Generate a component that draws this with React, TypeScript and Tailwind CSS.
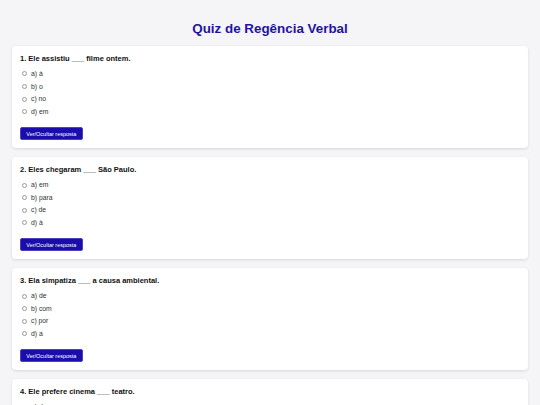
import React from 'react';

interface Question {
  text: string;
  options: string[];
}

const questions: Question[] = [
  { text: '1. Ele assistiu ___ filme ontem.', options: ['a) à', 'b) o', 'c) no', 'd) em'] },
  { text: '2. Eles chegaram ___ São Paulo.', options: ['a) em', 'b) para', 'c) de', 'd) à'] },
  { text: '3. Ela simpatiza ___ a causa ambiental.', options: ['a) de', 'b) com', 'c) por', 'd) a'] },
  { text: '4. Ele prefere cinema ___ teatro.', options: ['a) do que', 'b) a', 'c) que', 'd) de'] },
];

const QuestionCard: React.FC<{ q: Question; index: number }> = ({ q, index }) => (
  <div className="bg-white rounded-[4px] shadow-[0_1px_3px_rgba(0,0,0,0.12)] px-[8px] pt-[8px] pb-[8px]">
    <p className="text-[7.5px] leading-[9px] font-bold text-[#111]">{q.text}</p>
    <div className="mt-[4.7px] flex flex-col">
      {q.options.map((opt) => (
        <label key={opt} className="flex items-center h-[12.6px] pl-[2.3px] text-[6.8px] leading-[8px] text-[#333]">
          <input
            type="radio"
            name={`q${index}`}
            className="appearance-none shrink-0 w-[5px] h-[5px] rounded-full border-[0.7px] border-[#9a9a9a] bg-white m-0"
          />
          <span className="ml-[3.7px]">{opt}</span>
        </label>
      ))}
    </div>
    <button className="block mt-[9px] h-[13px] px-[5.3px] rounded-[2px] bg-[#1a0dab] text-white text-[5.5px] leading-[12px] border-[0.5px] border-[#4b3fc4]">
      Ver/Ocultar resposta
    </button>
  </div>
);

export default function App() {
  return (
    <div className="min-h-screen bg-[#f5f5f7] px-[12px] pt-[20.5px] pb-[20px]" style={{ fontFamily: '"Liberation Sans", Arial, sans-serif' }}>
      <h1 className="text-center text-[13.4px] leading-[16px] font-bold text-[#1f13a3]">Quiz de Regência Verbal</h1>
      <div className="mt-[9.5px] flex flex-col gap-[9px]">
        {questions.map((q, i) => (
          <QuestionCard key={i} q={q} index={i} />
        ))}
      </div>
    </div>
  );
}
